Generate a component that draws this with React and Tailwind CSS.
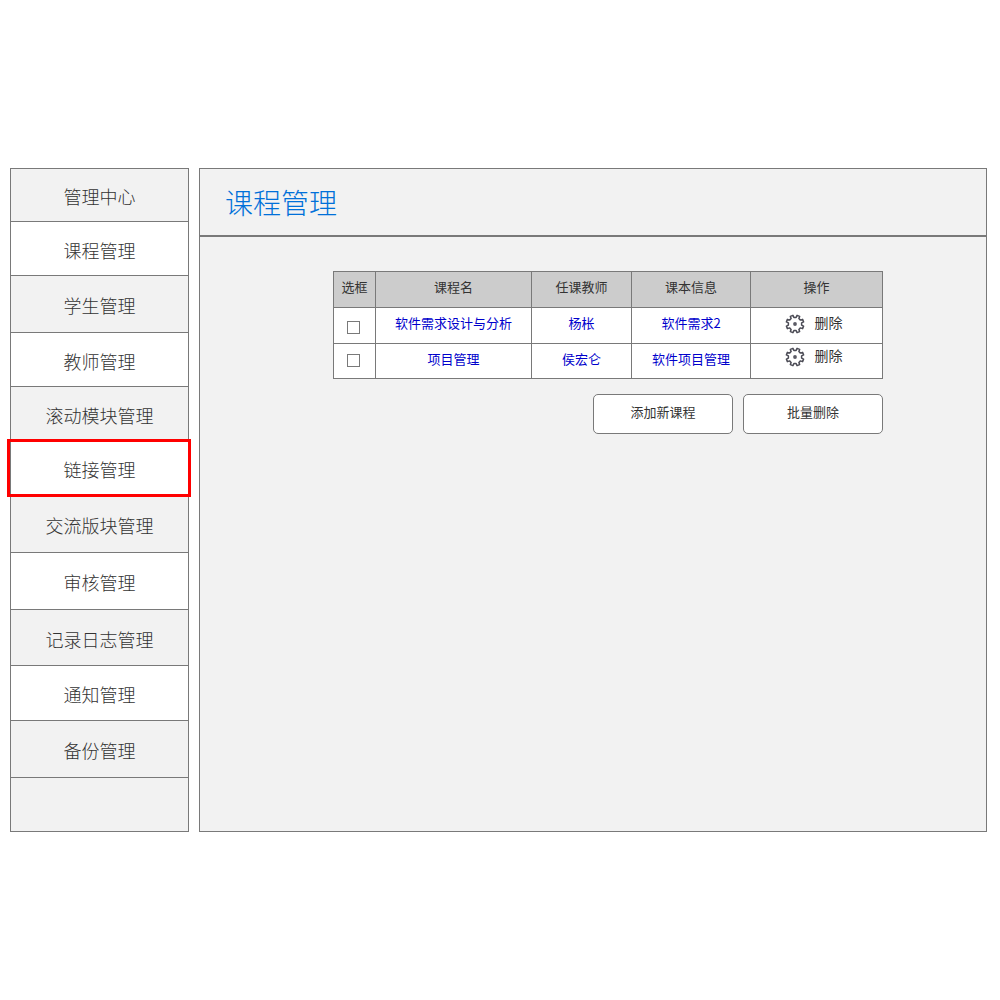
import React from "react";

const menu = [
  { label: "管理中心", size: "h-[53px]" },
  { label: "课程管理", size: "h-[54px]" },
  { label: "学生管理", size: "h-[57px]" },
  { label: "教师管理", size: "h-[54px]" },
  { label: "滚动模块管理", size: "h-[54px]" },
  { label: "链接管理", size: "h-[55px]", marked: true },
  { label: "交流版块管理", size: "h-[57px]" },
  { label: "审核管理", size: "h-[57px]" },
  { label: "记录日志管理", size: "h-[56px]" },
  { label: "通知管理", size: "h-[55px]" },
  { label: "备份管理", size: "h-[57px]" },
];

const courses = [
  {
    name: "软件需求设计与分析",
    teacher: "杨枨",
    book: "软件需求2",
    height: "h-9",
    boxPad: "pt-1",
    textPad: "pb-1.5",
    actionPad: "pb-1",
  },
  {
    name: "项目管理",
    teacher: "侯宏仑",
    book: "软件项目管理",
    height: "h-[35px]",
    boxPad: "pb-0.5",
    textPad: "pb-1",
    actionPad: "pb-2",
  },
];

// Eight rounded teeth, with a gap between teeth at each compass point.
function gearPath() {
  const points = [];
  for (let i = 0; i < 8; i++) {
    const mid = 22.5 + i * 45;
    [[-13, 6.7], [-9, 8.9], [9, 8.9], [13, 6.7]].forEach(([offset, r]) => {
      const a = ((mid + offset) * Math.PI) / 180;
      points.push(`${(10 + r * Math.cos(a)).toFixed(2)} ${(10 + r * Math.sin(a)).toFixed(2)}`);
    });
  }
  return `M${points.join("L")}Z`;
}

function Gear() {
  return (
    <svg viewBox="0 0 20 20" className="size-5 shrink-0" aria-hidden="true">
      <path d={gearPath()} fill="none" stroke="#4b4b55" strokeWidth="1.5" strokeLinejoin="round" />
      <circle cx="10" cy="10" r="1.9" fill="#5b5b65" />
    </svg>
  );
}

function Sidebar() {
  return (
    <nav className="w-[179px] shrink-0 border border-[#797979] bg-[#f2f2f2]">
      <ul>
        {menu.map((item) => (
          <li
            key={item.label}
            className={`relative border-b border-[#797979] even:bg-white ${item.size}`}
          >
            <a
              href="#"
              className="flex h-full items-center justify-center pt-0.5 text-lg font-light text-[#333]"
            >
              {item.label}
            </a>
            {item.marked && (
              <span className="pointer-events-none absolute -top-0.5 -right-[3px] -bottom-0.5 -left-1 z-10 border-3 border-[#ff0000]" />
            )}
          </li>
        ))}
        <li className="h-[53px]" />
      </ul>
    </nav>
  );
}

function CourseTable() {
  const cell = "border border-[#797979] p-0 text-center";
  return (
    <table className="w-full table-fixed border-collapse bg-white text-[13px] leading-5">
      <colgroup>
        <col className="w-[42px]" />
        <col />
        <col className="w-[100px]" />
        <col className="w-[119px]" />
        <col className="w-[132px]" />
      </colgroup>
      <thead>
        <tr className="h-9 bg-[#ccc] text-[#333]">
          {["选框", "课程名", "任课教师", "课本信息", "操作"].map((h) => (
            <th key={h} className={`${cell} pb-1.5 font-normal`}>
              {h}
            </th>
          ))}
        </tr>
      </thead>
      <tbody>
        {courses.map((c) => (
          <tr key={c.name} className={c.height}>
            <td className={`${cell} pr-0.5 ${c.boxPad}`}>
              <input
                type="checkbox"
                aria-label={c.name}
                className="mx-auto block size-[13px] appearance-none border border-[#797979] bg-white checked:bg-[#797979]"
              />
            </td>
            {[c.name, c.teacher, c.book].map((text) => (
              <td key={text} className={`${cell} ${c.textPad}`}>
                <a href="#" className="text-[#0000cc]">
                  {text}
                </a>
              </td>
            ))}
            <td className={`${cell} ${c.actionPad}`}>
              <button
                type="button"
                className="mx-auto flex items-center justify-center gap-2.5 pr-1.5 text-sm text-[#333]"
              >
                <Gear />
                <span className="pb-1">删除</span>
              </button>
            </td>
          </tr>
        ))}
      </tbody>
    </table>
  );
}

function ActionButton({ children }) {
  return (
    <button
      type="button"
      className="h-10 w-[140px] rounded-[5px] border border-[#797979] bg-white pb-1 text-[13px] text-[#333]"
    >
      {children}
    </button>
  );
}

export default function App() {
  return (
    <div className="flex min-h-screen items-center bg-white font-['Noto_Sans_CJK_SC',sans-serif]">
      <div className="flex w-full items-stretch gap-2.5 pr-[13px] pl-2.5">
        <Sidebar />
        <main className="min-w-0 flex-1 border border-[#797979] bg-[#f2f2f2]">
          <header className="border-b-2 border-[#797979] px-[25px] py-[13px]">
            <h1 className="text-[28px] leading-10 font-light text-[#0070d9]">课程管理</h1>
          </header>
          <section className="pt-[34px] pr-[103px] pl-[133px]">
            <CourseTable />
            <div className="mt-[15px] flex justify-end gap-2.5">
              <ActionButton>添加新课程</ActionButton>
              <ActionButton>批量删除</ActionButton>
            </div>
          </section>
        </main>
      </div>
    </div>
  );
}
